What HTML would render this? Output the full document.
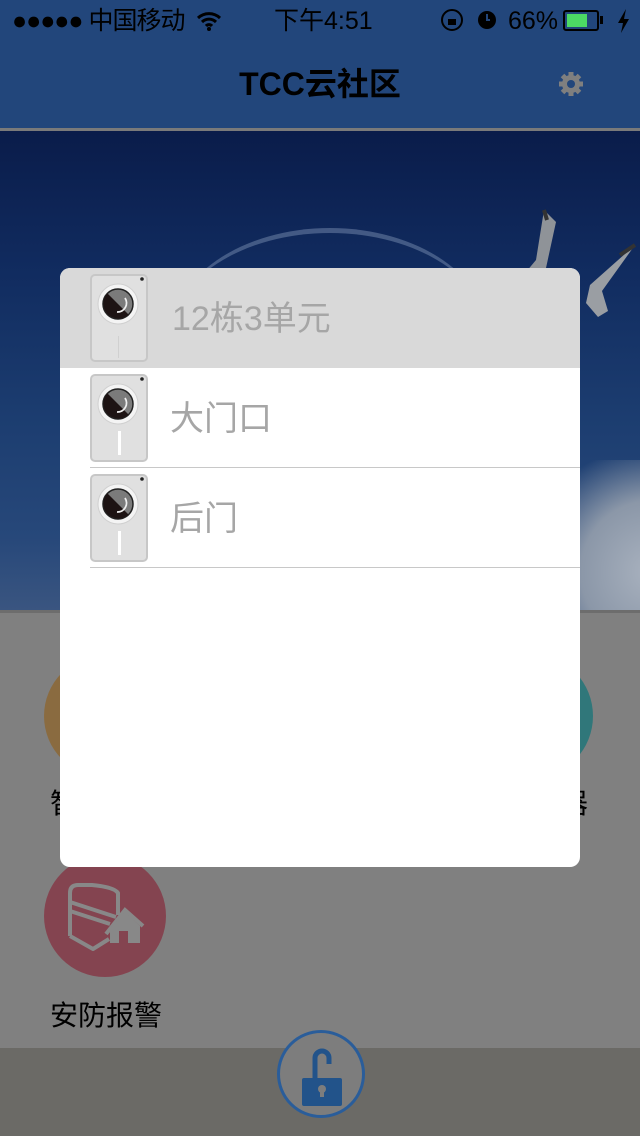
<!DOCTYPE html>
<html><head><meta charset="utf-8"><style>
*{margin:0;padding:0;box-sizing:border-box}
body{width:640px;height:1136px;overflow:hidden;position:relative;background:#808080;font-family:"Liberation Sans","Noto Sans CJK SC",sans-serif}
.abs{position:absolute}
</style></head><body>
<div class="abs" style="left:0;top:0;width:640px;height:128px;background:#22467b"></div>
<div class="abs" style="left:12px;top:4px;font-size:25px;color:#000;letter-spacing:-1px;line-height:34px">●●●●● 中国移动</div>
<svg class="abs" style="left:196px;top:10px" width="26" height="22" viewBox="0 0 26 22"><path d="M2 8a16 16 0 0 1 22 0M6 12a10 10 0 0 1 14 0M10 16a4 4 0 0 1 6 0" stroke="#000" stroke-width="3" fill="none"/><circle cx="13" cy="19" r="2" fill="#000"/></svg>
<div class="abs" style="left:274px;top:4px;font-size:25px;color:#000;line-height:34px">下午4:51</div>
<svg class="abs" style="left:440px;top:8px" width="60" height="24"><circle cx="12" cy="12" r="10" stroke="#000" stroke-width="2" fill="none"/><rect x="8" y="11" width="8" height="6" fill="#000"/><circle cx="47" cy="12" r="9" fill="#000"/><path d="M47 6v6h3" stroke="#22467b" stroke-width="2" fill="none"/></svg>
<div class="abs" style="left:508px;top:4px;font-size:25px;color:#000;line-height:34px">66%</div>
<div class="abs" style="left:563px;top:10px;width:36px;height:21px;border:2px solid #000;border-radius:3px;padding:2px"><div style="width:20px;height:13px;background:#4cd964"></div></div>
<div class="abs" style="left:600px;top:16px;width:3px;height:8px;background:#000"></div>
<svg class="abs" style="left:617px;top:9px" width="14" height="24"><path d="M9 0L1 14h5l-2 10 8-14H7z" fill="#000"/></svg>
<div class="abs" style="left:0;top:64px;width:640px;text-align:center;font-size:32px;font-weight:bold;color:#000;line-height:40px">TCC云社区</div>
<svg class="abs" style="left:556px;top:69px" width="30" height="30" viewBox="0 0 30 30"><g fill="#7f7f7f"><circle cx="15" cy="15" r="9"/><g stroke="#7f7f7f" stroke-width="5"><path d="M15 3v24M3 15h24M6.5 6.5l17 17M23.5 6.5l-17 17"/></g></g><circle cx="15" cy="15" r="4" fill="#22467b"/></svg>
<div class="abs" style="left:0;top:128px;width:640px;height:3px;background:#7a7a7a"></div>
<div class="abs" style="left:0;top:131px;width:640px;height:479px;overflow:hidden;background:linear-gradient(180deg,#0a1c4a 0%,#112c60 30%,#1c3d70 60%,#27487a 85%,#3a5580 100%)">
<div class="abs" style="left:170px;top:97px;width:320px;height:220px;border-radius:50%;border-top:5px solid rgba(130,150,185,.45)"></div>
<div class="abs" style="left:540px;top:329px;width:140px;height:160px;background:radial-gradient(ellipse at 80% 70%,#a9b2bf 0%,#8b97a8 45%,rgba(58,85,128,0) 80%)"></div>
<svg class="abs" style="left:510px;top:74px" width="130" height="150"><path d="M34 5L26 55l-10 12 20-4 10-46z" fill="#8f9398"/><path d="M34 5l3 10" stroke="#333" stroke-width="4"/><path d="M125 40L80 80l-4 18 12 14 10-6-6-20z" fill="#9a9ea3"/><path d="M125 40l-15 10" stroke="#333" stroke-width="4"/></svg>
</div>
<div class="abs" style="left:0;top:610px;width:640px;height:3px;background:#6d6d6d"></div>
<div class="abs" style="left:44px;top:655px;width:122px;height:122px;border-radius:50%;background:#8a6b40"></div>
<div class="abs" style="left:475px;top:655px;width:118px;height:122px;border-radius:50%;background:#30777a"></div>
<div class="abs" style="left:50px;top:782px;font-size:28px;color:#000">智</div>
<div class="abs" style="left:560px;top:782px;font-size:28px;color:#000">器</div>
<div class="abs" style="left:44px;top:855px;width:122px;height:122px;border-radius:50%;background:#844450"></div>
<svg class="abs" style="left:44px;top:855px" width="122" height="122" viewBox="0 0 122 122"><path d="M26 81V38q0-8 8-8h14q22 2 26 8v22M26 81l23 13 16-10" stroke="#888" stroke-width="4" fill="none" stroke-linejoin="round"/><path d="M26 47l46 15M26 56l40 13" stroke="#888" stroke-width="4"/><path d="M62 79l19-24 18 16" stroke="#888" stroke-width="4" fill="none"/><path d="M66 73l15-16 15 14v17H66z" fill="#888"/><rect x="75" y="76" width="9" height="12" fill="#844450"/></svg>
<div class="abs" style="left:50px;top:994px;font-size:28px;color:#000">安防报警</div>
<div class="abs" style="left:0;top:1048px;width:640px;height:88px;background:#6b6a66"></div>
<div class="abs" style="left:277px;top:1030px;width:88px;height:88px;border-radius:50%;border:3px solid #2a5d9a;background:#7d7d7d"></div>
<svg class="abs" style="left:277px;top:1030px" width="88" height="88" viewBox="0 0 88 88"><path d="M38 52V28a7 7 0 0 1 14 0v6" stroke="#22538a" stroke-width="5" fill="none"/><rect x="25" y="48" width="40" height="28" rx="2" fill="#22538a"/><circle cx="45" cy="59" r="4" fill="#7d7d7d"/><rect x="43" y="59" width="4" height="8" fill="#7d7d7d"/></svg>
<div class="abs" style="left:60px;top:268px;width:520px;height:599px;background:#fff;border-radius:10px;overflow:hidden">
<div style="height:100px;background:#d9d9d9"></div>
<div class="abs" style="left:30px;top:199px;width:490px;height:1px;background:#c8c8c8"></div>
<div class="abs" style="left:30px;top:299px;width:490px;height:1px;background:#c8c8c8"></div>
</div>
<div class="abs" style="left:172px;top:297px;font-size:34px;color:#a6a6a6;line-height:44px">12栋3单元</div>
<div class="abs" style="left:170px;top:397px;font-size:34px;color:#a6a6a6;line-height:44px">大门口</div>
<div class="abs" style="left:170px;top:497px;font-size:34px;color:#a6a6a6;line-height:44px">后门</div>
<svg width="0" height="0" style="position:absolute"><defs><g id="cam"><rect x="1" y="1" width="56" height="86" rx="4" fill="#e0e0e0" stroke="#c7c7c7" stroke-width="2"/><circle cx="52" cy="5" r="1.8" fill="#222"/><circle cx="28" cy="30" r="20" fill="#f4f4f4" stroke="#d0d0d0"/><circle cx="28" cy="30" r="15" fill="#7b7b7b"/><circle cx="28" cy="30" r="15" fill="none" stroke="#222" stroke-width="1.5"/><path d="M17.4 19.4a15 15 0 0 0 21.2 21.2z" fill="#1d1313"/><path d="M35 24a9 9 0 0 1-8 14" stroke="#eee" stroke-width="1.8" fill="none"/></g></defs></svg>
<svg class="abs" style="left:90px;top:274px" width="60" height="90"><use href="#cam"/><rect x="28" y="62" width="1" height="22" fill="#d0d0d0"/></svg>
<svg class="abs" style="left:90px;top:374px" width="60" height="90"><use href="#cam"/><rect x="28" y="57" width="3" height="24" fill="#fff"/></svg>
<svg class="abs" style="left:90px;top:474px" width="60" height="90"><use href="#cam"/><rect x="28" y="57" width="3" height="24" fill="#fff"/></svg>
</body></html>
